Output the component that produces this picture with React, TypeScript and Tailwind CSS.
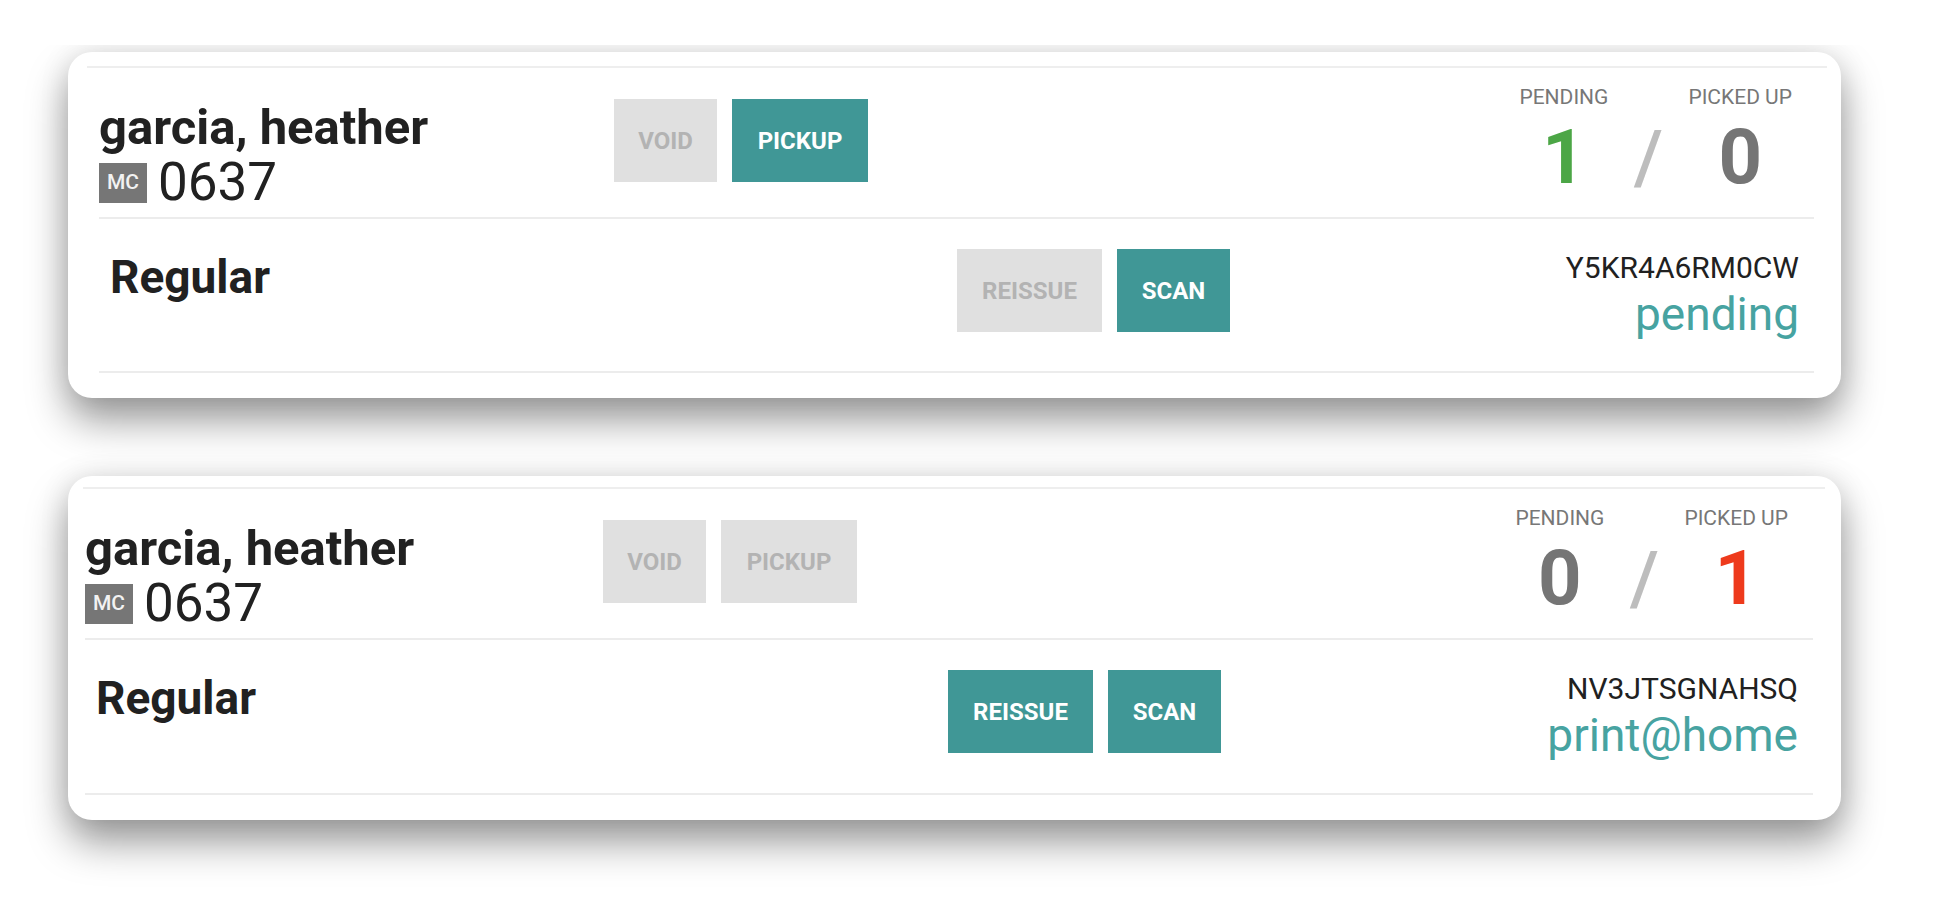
import React from 'react';

interface BtnProps {
  label: string;
  active: boolean;
  width: string;
}

function ActionButton({ label, active, width }: BtnProps) {
  return (
    <div
      className={`flex h-[83px] items-center justify-center text-[24px] font-bold uppercase ${width} ${
        active ? 'bg-[#409796] text-white' : 'bg-[#e0e0e0] text-[#b3b3b3]'
      }`}
    >
      {label}
    </div>
  );
}

interface StatsProps {
  pending: number;
  picked: number;
  pendingColor: string;
  pickedColor: string;
}

function Stats({ pending, picked, pendingColor, pickedColor }: StatsProps) {
  return (
    <div className="flex items-start">
      <div className="flex flex-col items-center">
        <span className="text-[21px] leading-[26px] text-[#777777]">PENDING</span>
        <span className={`mt-[10px] text-[76px] font-bold leading-[75px] ${pendingColor}`}>{pending}</span>
      </div>
      <div className="w-[80px] pt-[36px] text-center text-[75px] font-medium leading-[75px] text-[#bdbdbd]">/</div>
      <div className="flex flex-col items-center">
        <span className="text-[21px] leading-[26px] text-[#777777]">PICKED UP</span>
        <span className={`mt-[10px] text-[76px] font-bold leading-[75px] ${pickedColor}`}>{picked}</span>
      </div>
    </div>
  );
}

interface TicketCardProps {
  topLine: string;
  rows: string;
  nameCol: string;
  typeCol: string;
  statsGap: string;
  rowOneHeight: string;
  rowTwoHeight: string;
  pickupActive: boolean;
  reissueActive: boolean;
  stats: StatsProps;
  code: string;
  status: string;
}

function TicketCard(props: TicketCardProps) {
  return (
    <div className="ml-[68px] w-[1773px] rounded-[24px] bg-white pb-[25px] shadow-[0_22px_40px_rgba(0,0,0,0.4),0_0_30px_rgba(0,0,0,0.1)]">
      <div className={`h-[2px] bg-[#eeeeee] ${props.topLine}`} />
      <div className={props.rows}>
        <div className={`flex border-b-2 border-[#ececec] ${props.rowOneHeight}`}>
          <div className={`mt-[32px] shrink-0 ${props.nameCol}`}>
            <div className="text-[49px] font-bold leading-[55px] text-[#212121]">garcia, heather</div>
            <div className="flex h-[55px] items-center">
              <span className="flex h-[40px] w-[48px] items-center justify-center bg-[#767676] text-[21px] font-medium text-[#f2f2f2]">
                MC
              </span>
              <span className="ml-[11px] text-[53px] leading-[55px] text-[#212121]">0637</span>
            </div>
          </div>
          <div className="mt-[31px] flex gap-[15px]">
            <ActionButton label="Void" active={false} width="w-[103px]" />
            <ActionButton label="Pickup" active={props.pickupActive} width="w-[136px]" />
          </div>
          <div className="flex-1" />
          <div className={`mt-[16px] ${props.statsGap}`}>
            <Stats {...props.stats} />
          </div>
        </div>

        <div className={`flex border-b-2 border-[#ececec] ${props.rowTwoHeight}`}>
          <div className={`mt-[36px] shrink-0 pl-[11px] text-[46px] font-bold leading-[45px] text-[#212121] ${props.typeCol}`}>
            Regular
          </div>
          <div className="mt-[30px] flex gap-[15px]">
            <ActionButton label="Reissue" active={props.reissueActive} width="w-[145px]" />
            <ActionButton label="Scan" active={true} width="w-[113px]" />
          </div>
          <div className="flex-1" />
          <div className="mr-[15px] mt-[32px] flex flex-col items-end">
            <span className="text-[30px] leading-[34px] text-[#212121]">{props.code}</span>
            <span className="mt-[4px] text-[46px] leading-[50px] text-[#47a3a1]">{props.status}</span>
          </div>
        </div>
      </div>
    </div>
  );
}

export default function App() {
  return (
    <div className="min-h-screen bg-white font-['Roboto','Liberation_Sans',sans-serif]">
      <div className="mt-[45px] flex flex-col gap-[78px] overflow-hidden pb-[84px] pt-[7px]">
        <TicketCard
          topLine="ml-[19px] mr-[14px] mt-[14px]"
          rows="ml-[31px] mr-[27px]"
          nameCol="w-[515px]"
          typeCol="w-[858px]"
          statsGap="mr-[22px]"
          rowOneHeight="h-[151px]"
          rowTwoHeight="h-[154px]"
          pickupActive={true}
          reissueActive={false}
          stats={{ pending: 1, picked: 0, pendingColor: 'text-[#4ca646]', pickedColor: 'text-[#757575]' }}
          code="Y5KR4A6RM0CW"
          status="pending"
        />
        <TicketCard
          topLine="ml-[15px] mr-[16px] mt-[11px]"
          rows="ml-[17px] mr-[28px]"
          nameCol="w-[518px]"
          typeCol="w-[863px]"
          statsGap="mr-[25px]"
          rowOneHeight="h-[151px]"
          rowTwoHeight="h-[155px]"
          pickupActive={false}
          reissueActive={true}
          stats={{ pending: 0, picked: 1, pendingColor: 'text-[#757575]', pickedColor: 'text-[#ee3a1c]' }}
          code="NV3JTSGNAHSQ"
          status="print@home"
        />
      </div>
    </div>
  );
}
